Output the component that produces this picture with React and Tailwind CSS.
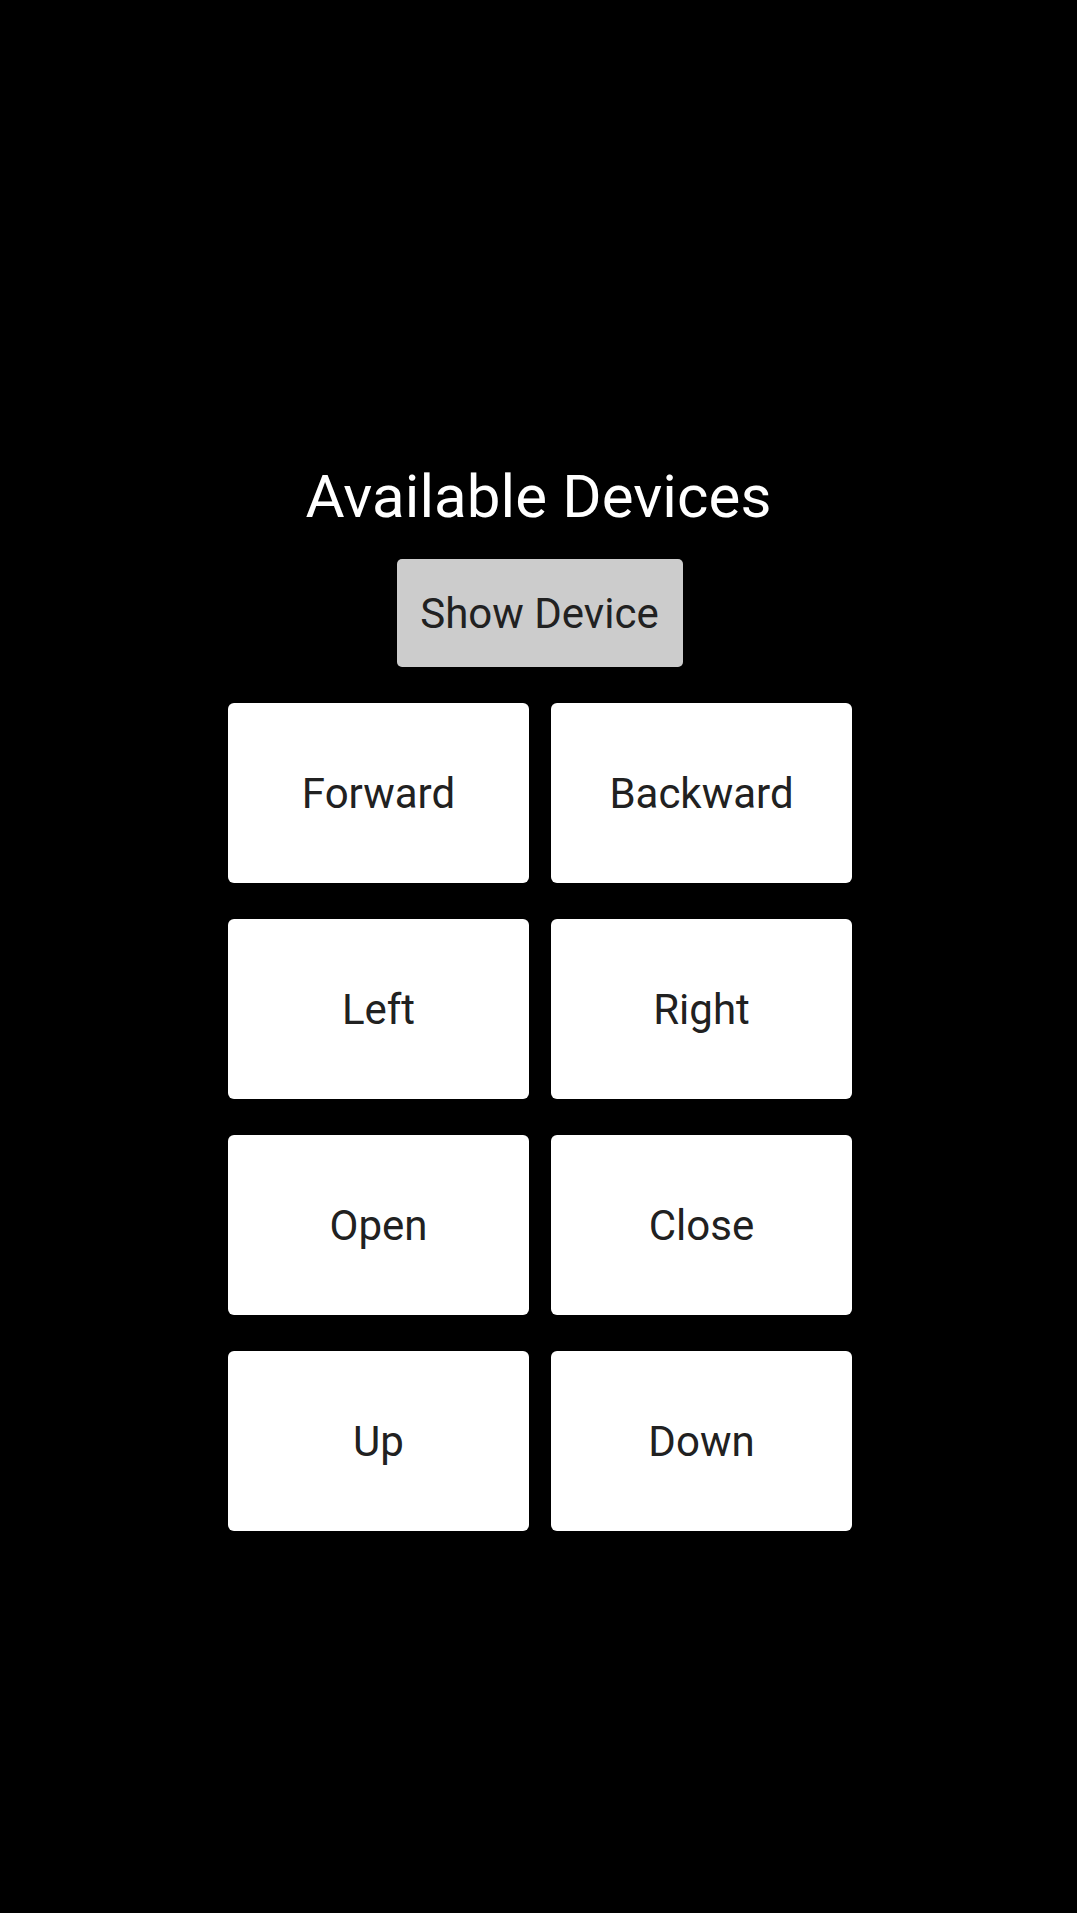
import React from "react";

const labels = ["Forward", "Backward", "Left", "Right", "Open", "Close", "Up", "Down"];

export default function App() {
  return (
    <div
      className="w-[1077px] h-[1913px] bg-black flex flex-col items-center"
      style={{ fontFamily: "Roboto, 'Noto Sans', sans-serif" }}
    >
      <div className="mt-[462px] h-[70px] leading-[70px] text-[60px] text-white tracking-[0.1px]">
        Available Devices
      </div>
      <button className="mt-[27px] ml-[2px] w-[286px] h-[108px] rounded-[5px] bg-[#cccccc] text-[42px] text-[#212121] flex items-center justify-center">
        Show Device
      </button>
      <div className="mt-[36px] ml-[3px] grid grid-cols-[301px_301px] gap-x-[22px] gap-y-[36px]">
        {labels.map((l) => (
          <button
            key={l}
            className="h-[180px] rounded-[6px] bg-white text-[42px] text-[#212121] flex items-center justify-center"
          >
            {l}
          </button>
        ))}
      </div>
    </div>
  );
}
